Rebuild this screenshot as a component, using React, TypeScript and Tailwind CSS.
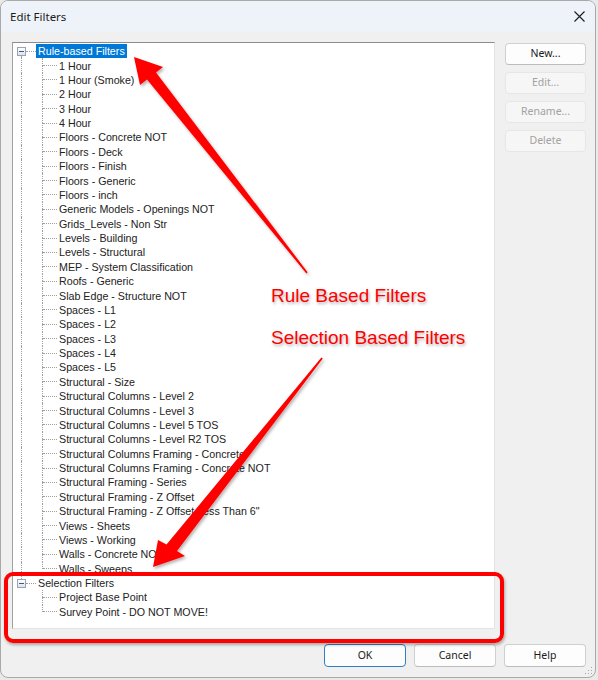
import React from "react";

const ruleFilters = [
  "1 Hour",
  "1 Hour (Smoke)",
  "2 Hour",
  "3 Hour",
  "4 Hour",
  "Floors - Concrete NOT",
  "Floors - Deck",
  "Floors - Finish",
  "Floors - Generic",
  "Floors - inch",
  "Generic Models - Openings NOT",
  "Grids_Levels - Non Str",
  "Levels - Building",
  "Levels - Structural",
  "MEP - System Classification",
  "Roofs - Generic",
  "Slab Edge - Structure NOT",
  "Spaces - L1",
  "Spaces - L2",
  "Spaces - L3",
  "Spaces - L4",
  "Spaces - L5",
  "Structural - Size",
  "Structural Columns - Level 2",
  "Structural Columns - Level 3",
  "Structural Columns - Level 5 TOS",
  "Structural Columns - Level R2 TOS",
  "Structural Columns Framing - Concrete",
  "Structural Columns Framing - Concrete NOT",
  "Structural Framing - Series",
  "Structural Framing - Z Offset",
  'Structural Framing - Z Offset Less Than 6"',
  "Views - Sheets",
  "Views - Working",
  "Walls - Concrete NOT",
  "Walls - Sweeps",
];

const selectionFilters = ["Project Base Point", "Survey Point - DO NOT MOVE!"];

const DOT = "border-dotted border-[#a0a0a0]";

function MinusBox() {
  return (
    <div className="flex h-[9px] w-[9px] items-center justify-center border border-[#9aa3b0] bg-gradient-to-b from-[#ffffff] to-[#dde3ec]">
      <div className="h-[1px] w-[5px] bg-[#3d5a8a]" />
    </div>
  );
}

function GroupRow({
  label,
  selected,
  above,
  below,
}: {
  label: string;
  selected?: boolean;
  above?: boolean;
  below?: boolean;
}) {
  return (
    <div className="flex h-[14.375px] items-stretch">
      <div className="w-[4px]" />
      <div className="flex w-[9px] flex-col">
        <div className={`w-[5px] flex-1 ${above ? `border-r ${DOT}` : ""}`} />
        <MinusBox />
        <div className={`w-[5px] flex-1 ${below ? `border-r ${DOT}` : ""}`} />
      </div>
      <div className="flex w-[10px] items-center">
        <div className={`w-full border-t ${DOT}`} />
      </div>
      <div className="flex items-center">
        <span
          className={`h-[14px] px-[2px] leading-[14px] ${
            selected ? "bg-[#0078d7] text-white" : "text-[#222222]"
          }`}
        >
          {label}
        </span>
      </div>
    </div>
  );
}

function LeafRow({ label, trunk, last }: { label: string; trunk: boolean; last: boolean }) {
  return (
    <div className="flex h-[14.375px] items-stretch">
      <div className={`w-[9px] ${trunk ? `border-r ${DOT}` : ""}`} />
      <div className="flex w-[21px] flex-col">
        <div className={`flex-1 border-r ${DOT}`} />
        <div className={`flex-1 ${last ? "" : `border-r ${DOT}`}`} />
      </div>
      <div className="flex w-[14px] items-center">
        <div className={`w-full border-t ${DOT}`} />
      </div>
      <span className="flex items-center whitespace-nowrap pl-[2px] text-[#222222]">{label}</span>
    </div>
  );
}

function SideButton({ label, enabled }: { label: string; enabled?: boolean }) {
  return (
    <div
      className={`flex h-[22px] w-[81px] items-center justify-center rounded-[4px] border ${
        enabled
          ? "border-[#d0d0d0] border-b-[#bcbcbc] bg-[#fdfdfd] text-[#1a1a1a]"
          : "border-[#e6e6e6] bg-[#f6f6f6] text-[#a2a2a2]"
      }`}
    >
      {label}
    </div>
  );
}

function FooterButton({ label, primary }: { label: string; primary?: boolean }) {
  return (
    <div
      className={`flex h-[23px] w-[82px] items-center justify-center rounded-[4px] border bg-[#fdfdfd] text-[#1a1a1a] ${
        primary ? "border-[#2f7fc8]" : "border-[#d0d0d0] border-b-[#bcbcbc]"
      }`}
    >
      {label}
    </div>
  );
}

function Arrows() {
  return (
    <svg
      className="pointer-events-none absolute left-0 top-0"
      width="598"
      height="680"
      viewBox="0 0 598 680"
    >
      <defs>
        <filter id="arrowShade" x="-20%" y="-20%" width="140%" height="140%">
          <feDropShadow dx="1.5" dy="2" stdDeviation="1.6" floodColor="#000" floodOpacity="0.3" />
        </filter>
      </defs>
      {/* arrow pointing at the rule-based group */}
      <polygon
        points="134,57 163,67 156,72.5 307.6,272.3 306.4,273.4 147,79.5 140,85"
        fill="#ff0000"
        filter="url(#arrowShade)"
      />
      {/* arrow pointing at the selection group */}
      <polygon
        points="153,567 158,540 166.5,544.5 321.4,357.4 322.8,358.6 177,551 185,556"
        fill="#ff0000"
        filter="url(#arrowShade)"
      />
    </svg>
  );
}

function ResizeGrip() {
  return (
    <svg className="absolute bottom-[2px] right-[2px]" width="8" height="8" viewBox="0 0 8 8">
      <rect x="6" y="0" width="1" height="1" fill="#a6a6a6" />
      <rect x="3" y="3" width="1" height="1" fill="#a6a6a6" />
      <rect x="6" y="3" width="1" height="1" fill="#a6a6a6" />
      <rect x="0" y="6" width="1" height="1" fill="#a6a6a6" />
      <rect x="3" y="6" width="1" height="1" fill="#a6a6a6" />
      <rect x="6" y="6" width="1" height="1" fill="#a6a6a6" />
    </svg>
  );
}

export default function App() {
  return (
    <div className="relative h-[680px] w-[598px] overflow-hidden bg-[#e9e9e9]">
      <div className="relative flex h-[678px] w-[596px] flex-col overflow-hidden rounded-[8px] border border-[#a9a9a9] bg-[#f0f0f0]">
        {/* title bar */}
        <div className="flex h-[31px] items-center justify-between bg-[#eef3f9] pl-[9px] pr-[10px]">
          <span className="font-['Noto_Sans',sans-serif] text-[11.5px] text-[#1a1a1a]">Edit Filters</span>
          <svg width="11" height="11" viewBox="0 0 11 11">
            <path d="M0.5 0.5 L10.5 10.5 M10.5 0.5 L0.5 10.5" stroke="#1a1a1a" strokeWidth="1.1" />
          </svg>
        </div>

        {/* body */}
        <div className="flex flex-1 flex-col pl-[11px] pr-[9px] pt-[10px] font-['Noto_Sans',sans-serif] text-[10.5px]">
          <div className="flex gap-[10px]">
            <div className="h-[587px] w-[483px] overflow-hidden border border-b-[#e3e3e3] border-l-[#a0a0a0] border-r-[#e3e3e3] border-t-[#8c8c8c] bg-white pt-[1px] font-['Liberation_Sans',Arial,sans-serif] text-[10.7px]">
              <GroupRow label="Rule-based Filters" selected below />
              {ruleFilters.map((f, i) => (
                <LeafRow key={f} label={f} trunk last={i === ruleFilters.length - 1} />
              ))}
              <GroupRow label="Selection Filters" above />
              {selectionFilters.map((f, i) => (
                <LeafRow key={f} label={f} trunk={false} last={i === selectionFilters.length - 1} />
              ))}
            </div>
            <div className="mt-[1px] flex flex-col gap-[7px]">
              <SideButton label="New..." enabled />
              <SideButton label="Edit..." />
              <SideButton label="Rename..." />
              <SideButton label="Delete" />
            </div>
          </div>
          <div className="mt-[15px] flex justify-end gap-[8px]">
            <FooterButton label="OK" primary />
            <FooterButton label="Cancel" />
            <FooterButton label="Help" />
          </div>
        </div>
        <ResizeGrip />
      </div>

      {/* callouts drawn over the dialog */}
      <div className="pointer-events-none absolute left-[4px] top-[572px] h-[71px] w-[500px] rounded-[9px] border-[4px] border-[#ff0000] shadow-[1px_2px_3px_rgba(0,0,0,0.3)]" />
      <Arrows />
      <div className="pointer-events-none absolute left-[271px] top-[286px] whitespace-nowrap font-['Liberation_Sans',Arial,sans-serif] text-[19px] leading-[19px] text-[#ff0000] [text-shadow:1px_2px_3px_rgba(0,0,0,0.3)]">
        Rule Based Filters
      </div>
      <div className="pointer-events-none absolute left-[271px] top-[328px] whitespace-nowrap font-['Liberation_Sans',Arial,sans-serif] text-[19px] leading-[19px] text-[#ff0000] [text-shadow:1px_2px_3px_rgba(0,0,0,0.3)]">
        Selection Based Filters
      </div>
    </div>
  );
}
